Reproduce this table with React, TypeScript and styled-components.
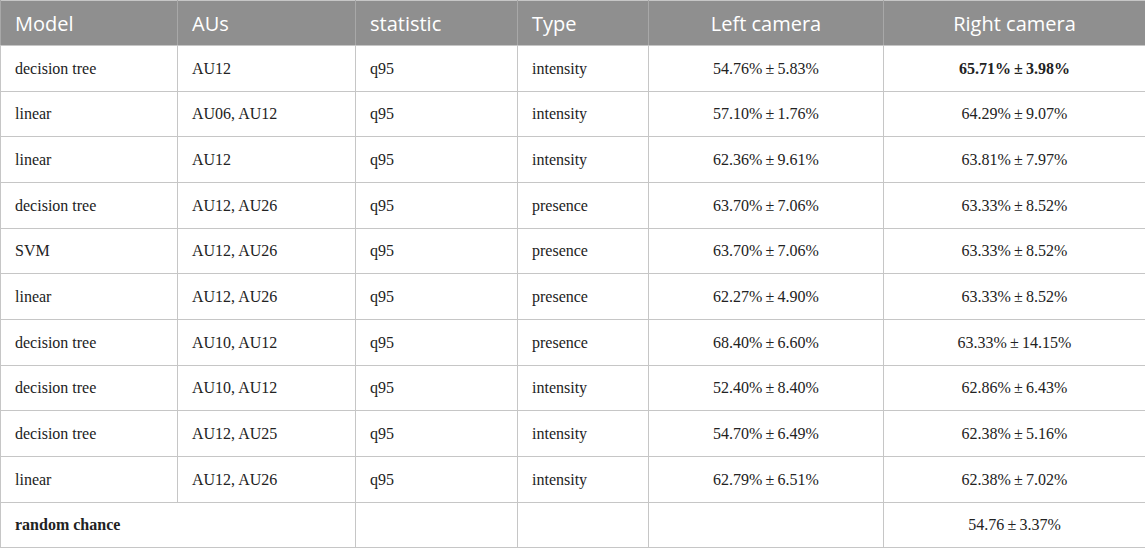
import React from "react";
import styled, { createGlobalStyle } from "styled-components";

const Global = createGlobalStyle`
  html, body { margin: 0; padding: 0; background: #fff; }
  #root { width: 1145px; }
`;

const Table = styled.table`
  width: 1145px;
  border-collapse: collapse;
  table-layout: fixed;
  border: 1px solid #c6c6c6;
`;

const HeadCell = styled.th<{ $center?: boolean }>`
  background: #8f8f8f;
  color: #fff;
  font-family: "Open Sans", "Noto Sans", sans-serif;
  font-weight: 400;
  font-size: 20px;
  height: 44px;
  padding: 0 14px;
  text-align: ${(p) => (p.$center ? "center" : "left")};
  border-left: 1px solid #a8a8a8;
  border-right: 1px solid #a8a8a8;
  border-bottom: 1px solid #c6c6c6;
  vertical-align: middle;
`;

const Row = styled.tr`
  height: 45.67px;
`;

const Cell = styled.td<{ $center?: boolean; $bold?: boolean }>`
  font-family: "Liberation Serif", "Times New Roman", serif;
  font-size: 16px;
  color: #222;
  padding: 1px 14px 0;
  border: 1px solid #c6c6c6;
  text-align: ${(p) => (p.$center ? "center" : "left")};
  font-weight: ${(p) => (p.$bold ? 700 : 400)};
  vertical-align: middle;
  white-space: nowrap;
`;

type R = { model: string; aus: string; stat: string; type: string; left: string; right: string; bold?: boolean };

const pm = (a: string, b: string) => `${a}\u2009±\u2009${b}`;

const rows: R[] = [
  { model: "decision tree", aus: "AU12", stat: "q95", type: "intensity", left: pm("54.76%", "5.83%"), right: pm("65.71%", "3.98%"), bold: true },
  { model: "linear", aus: "AU06, AU12", stat: "q95", type: "intensity", left: pm("57.10%", "1.76%"), right: pm("64.29%", "9.07%") },
  { model: "linear", aus: "AU12", stat: "q95", type: "intensity", left: pm("62.36%", "9.61%"), right: pm("63.81%", "7.97%") },
  { model: "decision tree", aus: "AU12, AU26", stat: "q95", type: "presence", left: pm("63.70%", "7.06%"), right: pm("63.33%", "8.52%") },
  { model: "SVM", aus: "AU12, AU26", stat: "q95", type: "presence", left: pm("63.70%", "7.06%"), right: pm("63.33%", "8.52%") },
  { model: "linear", aus: "AU12, AU26", stat: "q95", type: "presence", left: pm("62.27%", "4.90%"), right: pm("63.33%", "8.52%") },
  { model: "decision tree", aus: "AU10, AU12", stat: "q95", type: "presence", left: pm("68.40%", "6.60%"), right: pm("63.33%", "14.15%") },
  { model: "decision tree", aus: "AU10, AU12", stat: "q95", type: "intensity", left: pm("52.40%", "8.40%"), right: pm("62.86%", "6.43%") },
  { model: "decision tree", aus: "AU12, AU25", stat: "q95", type: "intensity", left: pm("54.70%", "6.49%"), right: pm("62.38%", "5.16%") },
  { model: "linear", aus: "AU12, AU26", stat: "q95", type: "intensity", left: pm("62.79%", "6.51%"), right: pm("62.38%", "7.02%") },
];

export default function App() {
  return (
    <>
      <Global />
      <Table>
        <colgroup>
          <col style={{ width: 177 }} />
          <col style={{ width: 178 }} />
          <col style={{ width: 162 }} />
          <col style={{ width: 131 }} />
          <col style={{ width: 235 }} />
          <col style={{ width: 262 }} />
        </colgroup>
        <thead>
          <tr>
            <HeadCell>Model</HeadCell>
            <HeadCell>AUs</HeadCell>
            <HeadCell>statistic</HeadCell>
            <HeadCell>Type</HeadCell>
            <HeadCell $center>Left camera</HeadCell>
            <HeadCell $center>Right camera</HeadCell>
          </tr>
        </thead>
        <tbody>
          {rows.map((r, i) => (
            <Row key={i}>
              <Cell>{r.model}</Cell>
              <Cell>{r.aus}</Cell>
              <Cell>{r.stat}</Cell>
              <Cell>{r.type}</Cell>
              <Cell $center>{r.left}</Cell>
              <Cell $center $bold={r.bold}>{r.right}</Cell>
            </Row>
          ))}
          <Row>
            <Cell colSpan={2} $bold>random chance</Cell>
            <Cell />
            <Cell />
            <Cell />
            <Cell $center>{pm("54.76", "3.37%")}</Cell>
          </Row>
        </tbody>
      </Table>
    </>
  );
}
